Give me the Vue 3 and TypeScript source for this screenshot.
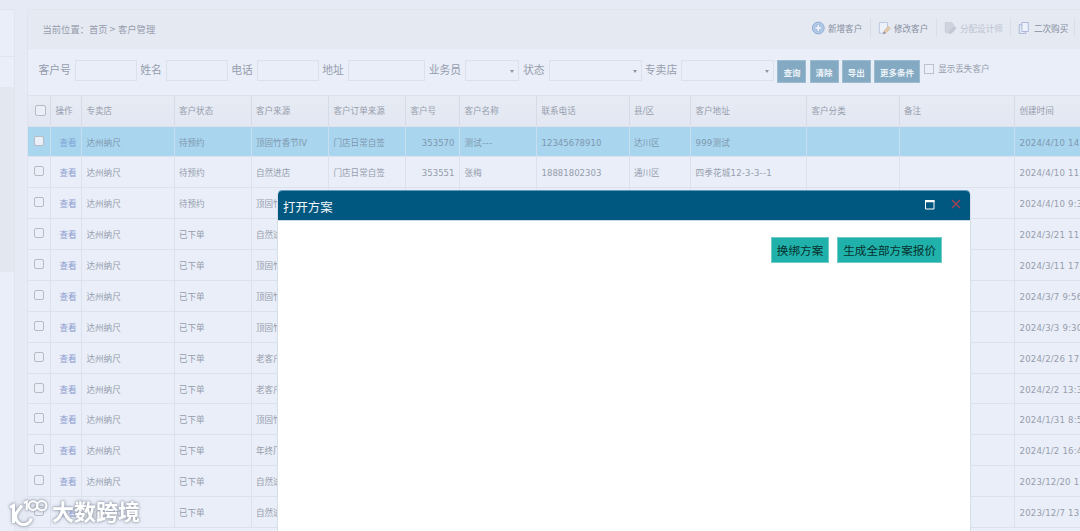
<script setup lang="ts">
interface Row {
  status: string
  source: string
  order?: string
  id?: string
  name?: string
  phone?: string
  area?: string
  address?: string
  created: string
}

const headers: string[] = [
  '操作', '专卖店', '客户状态', '客户来源', '客户订单来源', '客户号', '客户名称',
  '联系电话', '县/区', '客户地址', '客户分类', '备注', '创建时间',
]

const rows: Row[] = [
  { status: '待预约', source: '顶固竹香节IV', order: '门店日常自签', id: '353570', name: '测试---', phone: '12345678910', area: '达川区', address: '999测试', created: '2024/4/10 14' },
  { status: '待预约', source: '自然进店', order: '门店日常自签', id: '353551', name: '张梅', phone: '18881802303', area: '通川区', address: '四季花城12-3-3--1', created: '2024/4/10 11' },
  { status: '待预约', source: '顶固竹', created: '2024/4/10 9:3' },
  { status: '已下单', source: '自然进', created: '2024/3/21 11' },
  { status: '已下单', source: '顶固竹', created: '2024/3/11 17' },
  { status: '已下单', source: '顶固竹', created: '2024/3/7 9:56' },
  { status: '已下单', source: '顶固竹', created: '2024/3/3 9:30' },
  { status: '已下单', source: '老客户', created: '2024/2/26 17' },
  { status: '已下单', source: '老客户', created: '2024/2/2 13:3' },
  { status: '已下单', source: '顶固竹', created: '2024/1/31 8:5' },
  { status: '已下单', source: '年终厂', created: '2024/1/2 16:4' },
  { status: '已下单', source: '自然进', created: '2023/12/20 1' },
  { status: '已下单', source: '自然进', created: '2023/12/7 13' },
]

const textFilters = [
  { label: '客户号', size: 'short' },
  { label: '姓名', size: 'short' },
  { label: '电话', size: 'short' },
  { label: '地址', size: 'long' },
]
const selectFilters = [
  { label: '业务员', size: 'small' },
  { label: '状态', size: 'wide' },
  { label: '专卖店', size: 'wide' },
]
const actions = ['查询', '清除', '导出', '更多条件']
</script>

<template>
  <div class="page">
    <aside class="side">
      <div class="side-head"></div>
      <div class="side-gap"></div>
      <div class="side-active"></div>
    </aside>

    <main class="panel">
      <header class="topbar">
        <div class="crumb"><span>当前位置：</span><span class="home">首页</span><span class="arrow">&gt;</span><span>客户管理</span></div>
        <nav class="tools">
          <div class="tool t1">
            <svg width="14" height="14" viewBox="0 0 14 14">
              <circle cx="7.3" cy="7" r="5.9" fill="#a9c6e6" stroke="#92acd3" stroke-width="1" />
              <circle cx="7.3" cy="7" r="4.7" fill="none" stroke="#c3d9ef" stroke-width=".6" />
              <path d="M6.1 3.6h2.4v2.2h2.2v2.4H8.5v2.2H6.1V8.2H3.9V5.8h2.2z" fill="#edf4fc" stroke="#8aa6d1" stroke-width=".5" />
            </svg>
            <span>新增客户</span>
          </div>
          <div class="tool t2">
            <svg width="14" height="14" viewBox="0 0 14 14">
              <path d="M2.3 1.5h8.2v6L6 12.2H2.3z" fill="#edf1fa" stroke="#b3bddd" stroke-width=".8" />
              <path d="M6.6 12.6l.8-3 4-4.1 1.8 1.8-4 4.2z" fill="#e9cfa9" stroke="#c5ab91" stroke-width=".7" />
              <path d="M6.3 12.9l.7-2.3 1.6 1.7z" fill="#777e91" />
            </svg>
            <span>修改客户</span>
          </div>
          <div class="tool t3 disabled">
            <svg width="14" height="14" viewBox="0 0 14 14">
              <path d="M2.3 1.5h6.2l2 2v4L6 12.2l-3.7-1z" fill="#cfd3de" stroke="#c6cbd6" stroke-width=".8" />
              <path d="M6.6 12.6l.8-3 4-4.1 1.6 1.8-3.8 4.2z" fill="#c4c9d4" stroke="#b9bfcd" stroke-width=".7" />
            </svg>
            <span>分配设计师</span>
          </div>
          <div class="tool t4">
            <svg width="14" height="14" viewBox="0 0 14 14">
              <path d="M4.9 1.5h6.4v9H4.9z" fill="#edf1fa" stroke="#a6b2d8" stroke-width=".9" />
              <path d="M4.9 3.7H2.2v8.8h6.4v-2" fill="none" stroke="#a6b2d8" stroke-width=".9" />
            </svg>
            <span>二次购买</span>
          </div>
        </nav>
      </header>

      <section class="filters">
        <template v-for="f in textFilters" :key="f.label">
          <label>{{ f.label }}</label>
          <div class="field" :class="f.size"></div>
        </template>
        <template v-for="f in selectFilters" :key="f.label">
          <label>{{ f.label }}</label>
          <div class="field select" :class="f.size"><i></i></div>
        </template>
        <button v-for="a in actions" :key="a" type="button">{{ a }}</button>
        <span class="box square"></span>
        <span class="lost">显示丢失客户</span>
      </section>

      <section class="table">
        <div class="row head">
          <div class="check"><span class="box"></span></div>
          <div v-for="h in headers" :key="h">{{ h }}</div>
        </div>
        <div v-for="(r, i) in rows" :key="i" class="row" :class="{ selected: i === 0 }">
          <div class="check"><span class="box"></span></div>
          <div class="link">查看</div>
          <div>达州纳尺</div>
          <div>{{ r.status }}</div>
          <div>{{ r.source }}</div>
          <div>{{ r.order }}</div>
          <div class="num">{{ r.id }}</div>
          <div class="name">{{ r.name }}</div>
          <div>{{ r.phone }}</div>
          <div>{{ r.area }}</div>
          <div class="spaced">{{ r.address }}</div>
          <div></div>
          <div></div>
          <div class="spaced">{{ r.created }}</div>
        </div>
      </section>
    </main>

    <section class="dialog">
      <header class="dialog-head">
        <h1>打开方案</h1>
        <svg class="max" width="10" height="10" viewBox="0 0 10 10"><path d="M.5 .5h8.5v8.5H.5z" fill="none" stroke="#fff" /><path d="M0 0h9.5v2.3H0z" fill="#fff" /></svg>
        <svg class="close" width="10" height="10" viewBox="0 0 10 10"><path d="M1 1l8 8M9 1L1 9" stroke="#b04050" stroke-width="1.2" /></svg>
      </header>
      <div class="dialog-body">
        <button type="button">换绑方案</button>
        <button type="button">生成全部方案报价</button>
      </div>
    </section>

    <div class="watermark">
      <svg width="40" height="30" viewBox="0 0 40 30" fill="none" stroke="#fff">
        <path d="M1 9.3L4.5 7.4V25" stroke-width="3" />
        <path d="M13 7.5L9.2 12.6a8 8 0 1 0 13.2 7.6" stroke-width="3" />
        <path d="M14.8 5.2L17.8 3.4V12" stroke-width="2" />
        <circle cx="24" cy="7.6" r="4.3" stroke-width="2" />
        <circle cx="32.8" cy="7.6" r="4.6" stroke-width="2" />
      </svg>
      <span>大数跨境</span>
    </div>
  </div>
</template>

<style>
html, body { margin: 0; overflow: hidden; }
</style>

<style scoped>
* { box-sizing: border-box; }
.page {
  position: relative;
  display: flex;
  align-items: flex-start;
  width: 1080px;
  height: 531px;
  padding-top: 9px;
  overflow: hidden;
  background: #e6eaf5;
  color: #969dad;
  font-family: "DejaVu Sans", "Noto Sans CJK SC", sans-serif;
  font-size: 8.55px;
  white-space: nowrap;
}
.side {
  width: 15px;
  height: 522px;
  flex: none;
  margin-right: 12px;
  background: #e9eef8;
  border: 1px solid #dfe4ef;
  border-left: 0;
  border-bottom: 0;
  border-top-right-radius: 3px;
}
.side-head { height: 47px; border-bottom: 1px solid #dfe4ef; }
.side-gap { height: 30px; }
.side-active { height: 185px; background: #e3e7f0; }
.panel {
  flex: none;
  width: 1053px;
  height: 522px;
  overflow: hidden;
  background: #e9eef8;
  border-left: 1px solid #dfe4ee;
  border-top: 1px solid #e1e5ef;
}
.topbar {
  display: flex;
  justify-content: space-between;
  height: 39px;
  background: #e5e9f2;
}
.crumb {
  display: flex;
  padding-left: 14.5px;
  font-size: 9.3px;
  line-height: 39px;
}
.home { width: 20px; }
.arrow { width: 9px; font-size: 8px; }
.tools { display: flex; padding-top: 8px; }
.tool {
  display: flex;
  align-items: center;
  gap: 3px;
  height: 19px;
  border-right: 1px solid #d9deea;
  color: #868d9e;
}
.tool svg { flex: none; }
.t1 { width: 60px; }
.t2 { width: 66px; padding-left: 6px; }
.t3 { width: 74px; padding-left: 6px; }
.t4 { width: 64px; padding-left: 6px; margin-right: 5px; }
.disabled { color: #bcc2cf; }
.filters {
  display: flex;
  height: 46px;
  padding: 11px 0 0 10.5px;
}
.filters label {
  margin-right: 4px;
  font-size: 10.8px;
  line-height: 22px;
}
.field {
  height: 21px;
  margin-right: 3.4px;
  border: 1px solid #dce0ea;
}
.short { width: 62px; }
.long { width: 77px; margin-right: 3.8px; }
.small { width: 54px; margin-right: 4px; }
.wide { width: 93px; margin-right: 3.2px; }
.select { display: flex; justify-content: flex-end; padding: 9px 4px 0 0; }
.select i {
  width: 0;
  height: 0;
  border: 2.7px solid transparent;
  border-top: 3.5px solid #8d94a5;
  border-bottom: 0;
}
.filters button {
  height: 23px;
  margin: 0 3.2px 0 0;
  padding: 1px 5px 0;
  border: 1px solid #9dbbcf;
  background: #84aac3;
  color: #edf3f8;
  font: bold 8.5px "DejaVu Sans", "Noto Sans CJK SC", sans-serif;
}
.box {
  display: block;
  width: 10px;
  height: 10px;
  border: 1px solid #b6bbc6;
  border-radius: 2px;
  background: #ebeff8;
}
.square { margin: 4px 4px 0 1px; border-radius: 0; border-color: #bcc2ce; }
.lost { line-height: 19px; }
.row {
  display: grid;
  grid-template-columns: 23px 31px 92.5px 77px 77.5px 77px 54px 77px 92.5px 61.5px 116px 92.5px 115.5px 120px;
  height: 30.88px;
  border-bottom: 1px solid #dce1ec;
}
.row > div {
  overflow: hidden;
  padding-left: 4.5px;
  border-right: 1px solid #dce1ec;
  line-height: 32px;
}
.row > .check { padding: 9px 0 0 6px; }
.row > .link { padding-left: 8.5px; color: #8b9cd0; }
.row > .num { padding: 0 4.5px 0 0; text-align: right; }
.row > .name { letter-spacing: 0.3px; }
.row > .spaced { letter-spacing: 0.2px; }
.head {
  height: 31.5px;
  border-top: 1px solid #dce1eb;
  background: linear-gradient(#e7ebf4, #e3e7f1);
}
.head > div { line-height: 31px; border-right-color: #d6dbe6; }
.head > .check { padding: 9px 0 0 7px; }
.head .box { width: 11px; height: 11px; }
.selected { background: #a9d5ef; color: #7e98ae; }
.selected > div { border-right-color: #c8deef; }
.selected > .link { color: #7da4d5; }
.dialog {
  position: absolute;
  left: 277px;
  top: 190px;
  width: 694px;
  height: 345px;
  border: 1px solid #d6dfe7;
  border-top-color: #5f9ab8;
  border-radius: 5px 5px 0 0;
  overflow: hidden;
  background: #fff;
}
.dialog-head {
  display: flex;
  align-items: flex-start;
  height: 30px;
  padding-left: 5px;
  border-bottom: 1px solid #c9dce5;
  background: #00577f;
}
.dialog-head h1 {
  flex: 1;
  margin: 0;
  color: #f2f7fa;
  font-size: 12.4px;
  font-weight: 400;
  line-height: 33px;
}
.max { margin: 9px 16px 0 0; }
.close { margin: 8px 9.5px 0 0; }
.dialog-body {
  display: flex;
  justify-content: flex-end;
  gap: 8px;
  padding: 16px 28px 0 0;
}
.dialog-body button {
  height: 26px;
  margin: 0;
  padding: 0 5px;
  border: 1px solid #6fcac8;
  background: #20b2aa;
  color: #07302e;
  font: 11.6px "DejaVu Sans", "Noto Sans CJK SC", sans-serif;
}
.watermark {
  position: absolute;
  left: 9px;
  top: 496px;
  display: flex;
  align-items: center;
  gap: 3px;
  color: #fff;
  font-size: 22px;
  font-weight: 700;
  line-height: 33px;
  filter: drop-shadow(0 0 1px #9ba2b0) drop-shadow(0 0 1.5px #a8aebb);
}
</style>
